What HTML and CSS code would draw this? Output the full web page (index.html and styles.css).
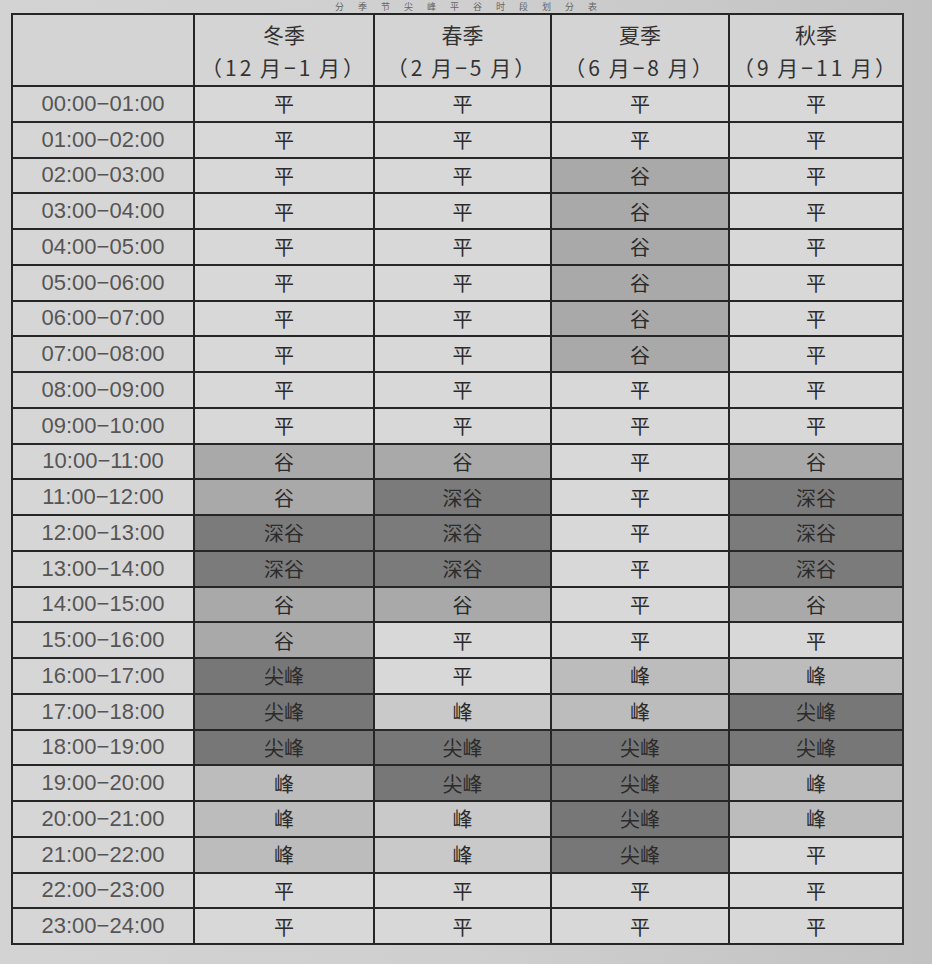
FILE: index.html
```html
<!DOCTYPE html>
<html lang="zh">
<head>
<meta charset="utf-8">
<link rel="stylesheet" href="styles.css">
</head>
<body>
<div class="title">分季节尖峰平谷时段划分表</div>
<table class="grid">
  <colgroup>
    <col class="c0"><col class="c1"><col class="c2"><col class="c3"><col class="c4">
  </colgroup>
  <thead>
    <tr class="head">
      <th></th>
      <th>冬季<br><span class="m">（12 月−1 月）</span></th>
      <th>春季<br><span class="m">（2 月−5 月）</span></th>
      <th>夏季<br><span class="m">（6 月−8 月）</span></th>
      <th>秋季<br><span class="m">（9 月−11 月）</span></th>
    </tr>
  </thead>
  <tbody id="rows"></tbody>
</table>
<script src="app.js"></script>
</body>
</html>
```
FILE: app.js
```js
var data = [
  "平平平平","平平平平","平平谷平","平平谷平","平平谷平","平平谷平","平平谷平","平平谷平",
  "平平平平","平平平平","谷谷平谷",["谷","深谷","平","深谷"],["深谷","深谷","平","深谷"],["深谷","深谷","平","深谷"],
  "谷谷平谷","谷平平平",["尖峰","平","峰","峰"],["尖峰","峰","峰","尖峰"],["尖峰","尖峰","尖峰","尖峰"],
  ["峰","尖峰","尖峰","峰"],["峰","峰","尖峰","峰"],["峰","峰","尖峰","平"],"平平平平","平平平平"
];
var cls = {"平":"p","谷":"g","深谷":"sg","峰":"f","尖峰":"jf"};
function pad(n){return (n<10?"0":"")+n;}
var tb = document.getElementById("rows");
var html = "";
for (var i = 0; i < 24; i++) {
  var r = data[i];
  if (typeof r === "string") r = r.split("");
  html += '<tr><td class="t">' + pad(i) + ':00−' + pad(i+1) + ':00</td>';
  for (var j = 0; j < 4; j++) {
    var k = cls[r[j]];
    if (j === 1 && r[j] === "峰") k = "f2";
    html += '<td class="' + k + '">' + r[j] + '</td>';
  }
  html += '</tr>';
}
tb.innerHTML = html;
```
FILE: styles.css
```css
html, body {
  margin: 0;
  padding: 0;
}
body {
  width: 932px;
  height: 964px;
  overflow: hidden;
  background: linear-gradient(90deg, #d3d3d3 0%, #cfcfcf 50%, #c2c2c2 100%);
  font-family: "Noto Sans CJK SC", "Noto Sans", sans-serif;
  color: #2e2e2e;
  -webkit-font-smoothing: antialiased;
}
.title {
  height: 13px;
  line-height: 13px;
  text-align: center;
  font-size: 9px;
  color: #666;
  letter-spacing: 14px;
  padding-left: 14px;
}
.grid {
  margin-left: 11px;
  border-collapse: collapse;
  table-layout: fixed;
  width: 891px;
}
.c0 { width: 182px; }
.c1 { width: 180px; }
.c2 { width: 177px; }
.c3 { width: 178px; }
.c4 { width: 174px; }
.grid th, .grid td {
  border: 2px solid #262626;
  padding: 0;
  text-align: center;
  font-weight: 400;
}
.head th {
  height: 69px;
  font-size: 21px;
  line-height: 33px;
  color: #333;
  background: #d4d4d4;
  padding-top: 1px;
}
.head .m {
  letter-spacing: 3px;
  font-size: 21px;
  word-spacing: -2px;
}
.grid td {
  height: 33.75px;
  font-size: 20px;
  color: #2b2b2b;
}
.grid td.t {
  font-family: "Liberation Sans", "DejaVu Sans", sans-serif;
  font-size: 22px;
  color: #555;
  letter-spacing: 0;
  background: #d6d6d6;
}
.p { background: #d8d8d8; }
.g { background: #a9a9a9; }
.sg { background: #7b7b7b; }
.f { background: #bcbcbc; }
.f2 { background: #c9c9c9; }
.jf { background: #777777; }
```
